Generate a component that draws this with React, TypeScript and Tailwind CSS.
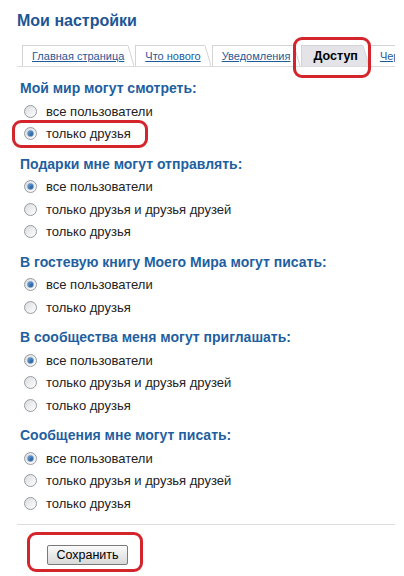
const TABS = [
  { label: "Главная страница", active: false },
  { label: "Что нового", active: false },
  { label: "Уведомления", active: false },
  { label: "Доступ", active: true },
  { label: "Черный список", active: false },
];

const SECTIONS = [
  { title: "Мой мир могут смотреть:", options: ["все пользователи", "только друзья"], checked: 1 },
  {
    title: "Подарки мне могут отправлять:",
    options: ["все пользователи", "только друзья и друзья друзей", "только друзья"],
    checked: 0,
  },
  { title: "В гостевую книгу Моего Мира могут писать:", options: ["все пользователи", "только друзья"], checked: 0 },
  {
    title: "В сообщества меня могут приглашать:",
    options: ["все пользователи", "только друзья и друзья друзей", "только друзья"],
    checked: 0,
  },
  {
    title: "Сообщения мне могут писать:",
    options: ["все пользователи", "только друзья и друзья друзей", "только друзья"],
    checked: 0,
  },
];

function Radio({ checked }: { checked: boolean }) {
  return (
    <span className="flex items-center justify-center w-[13px] h-[13px] rounded-full border border-[#959ca4] bg-gradient-to-br from-[#d9dcdf] to-[#ffffff] shrink-0">
      {checked && <span className="w-[7px] h-[7px] rounded-full border border-[#6f97c0] bg-gradient-to-br from-[#6aa6dc] to-[#174f8c]" />}
    </span>
  );
}

function Tab({ label, active }: { label: string; active: boolean }) {
  return (
    <div className="flex items-end h-[21px] shrink-0">
      <div
        className={
          "flex items-center h-full border-l border-t border-[#d4d4d4] " +
          (active ? "bg-[#e3e3e8] pl-[11px] pr-[5px]" : "bg-white pl-[9px] pr-[4px]")
        }
      >
        {active ? (
          <span className="text-[12.5px] font-bold text-black">{label}</span>
        ) : (
          <span className="text-[11px] text-[#1f5a99] underline">{label}</span>
        )}
      </div>
      <svg width="6" height="21" viewBox="0 0 6 21" className="shrink-0">
        <polygon points="0,0 6,21 0,21" fill={active ? "#e3e3e8" : "#ffffff"} />
        <line x1="0" y1="0.5" x2="6" y2="21" stroke="#d4d4d4" strokeWidth="1" />
      </svg>
    </div>
  );
}

export default function App() {
  return (
    <div className="relative w-[404px] h-[576px] bg-white overflow-hidden font-['Liberation_Sans',Arial,sans-serif]">
      <div className="pl-[17px] pr-[9px] pt-[10px]">
        <h1 className="text-[16px] leading-[22px] font-bold text-[#1d5595]">Мои настройки</h1>

        {/* Tabs */}
        <div className="mt-[13px] flex gap-[1px] pl-[5px] border-b border-[#dcdcdc] whitespace-nowrap overflow-hidden">
          {TABS.map((t) => (
            <Tab key={t.label} label={t.label} active={t.active} />
          ))}
        </div>

        {/* Settings */}
        <div className="mt-[10px] pl-[3px] flex flex-col gap-[7.5px]">
          {SECTIONS.map((s) => (
            <div key={s.title} className="flex flex-col">
              <div className="h-[23px] flex items-center text-[14px] font-bold text-[#1f5fa0]">{s.title}</div>
              {s.options.map((o, i) => (
                <label key={o} className="h-[22.5px] flex items-center gap-[9px] pl-[4px] text-[13px] text-[#222]">
                  <Radio checked={i === s.checked} />
                  <span>{o}</span>
                </label>
              ))}
            </div>
          ))}
        </div>

        <div className="mt-[9px] border-t border-[#dddddd]" />

        <div className="pt-[17px] pl-[30px]">
          <button className="h-[20px] w-[81px] border border-[#7a7a7a] rounded-[2px] bg-gradient-to-b from-[#fbfbfb] to-[#d9d9d9] text-[12.5px] text-black leading-none">
            Сохранить
          </button>
        </div>
      </div>

      {/* Red annotation frames */}
      <div className="absolute left-[293px] top-[37px] w-[78px] h-[41px] border-[3px] border-[#d4242c] rounded-[9px]" />
      <div className="absolute left-[12px] top-[120px] w-[136px] h-[28px] border-[3px] border-[#d4242c] rounded-[9px]" />
      <div className="absolute left-[27px] top-[532px] w-[116px] h-[40px] border-[3px] border-[#d4242c] rounded-[9px]" />
    </div>
  );
}
